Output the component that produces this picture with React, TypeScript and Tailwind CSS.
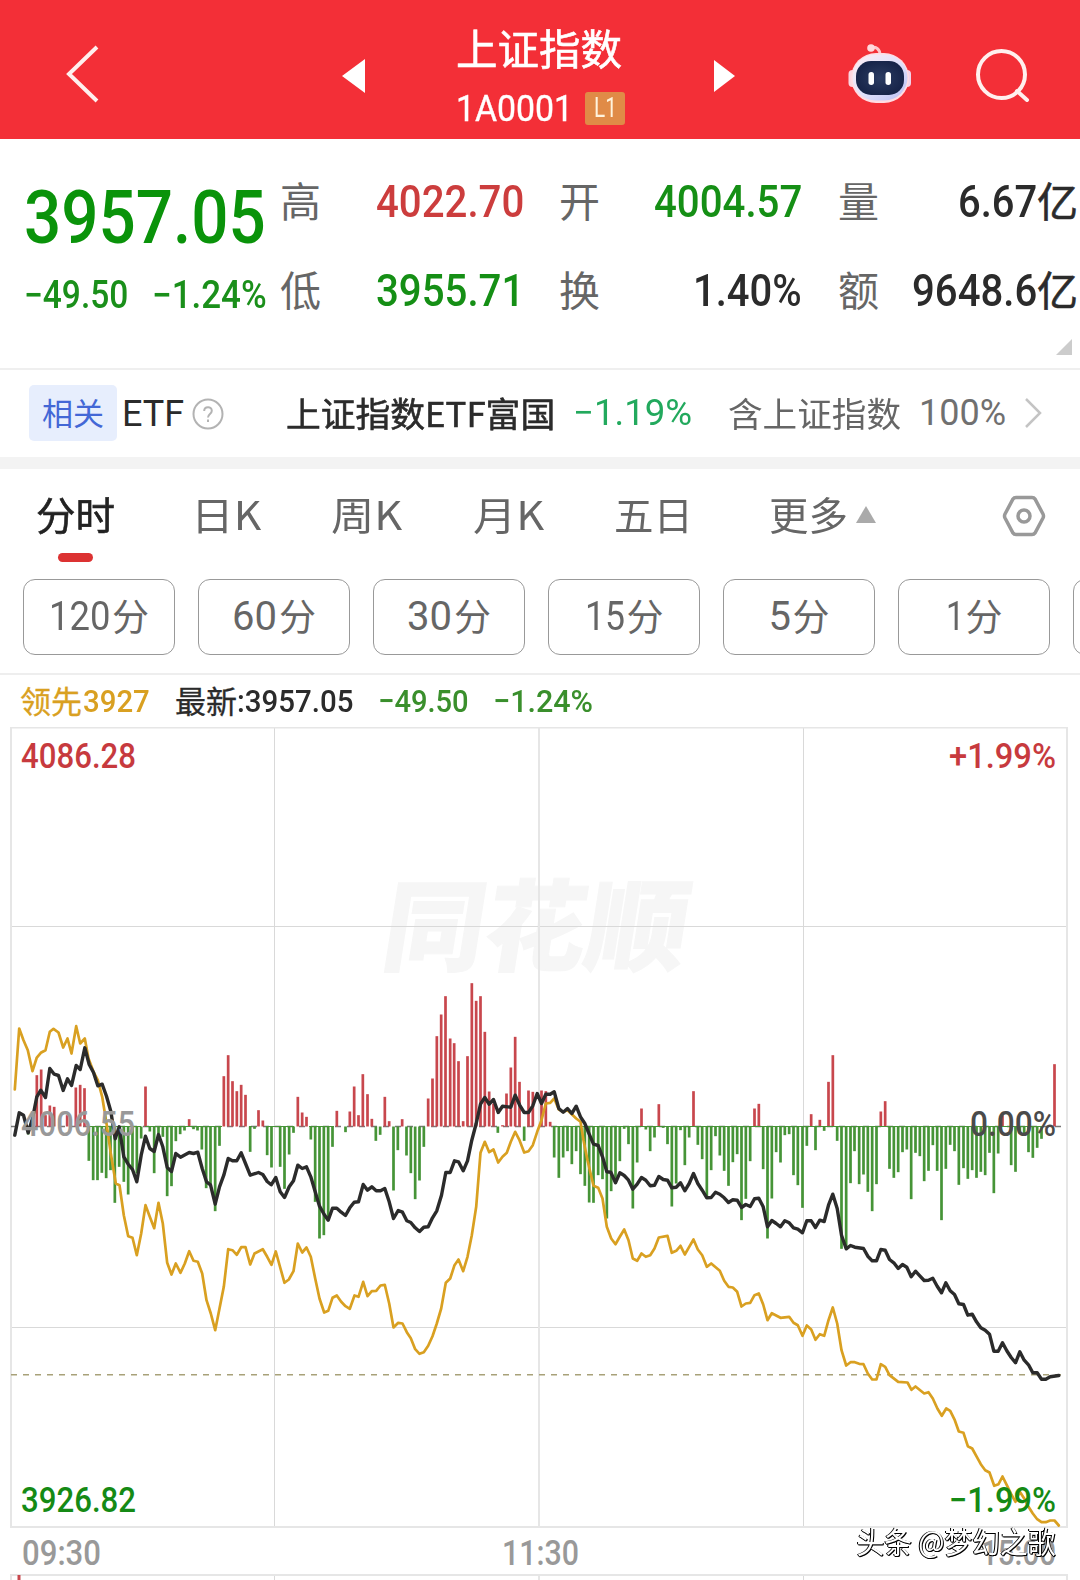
import { useLayoutEffect, useRef, useState, type ReactNode } from "react";

type Point = [number, number];

/** Condenses a line of text so that it fills the width of its box. */
function Fit({ className, children }: { className: string; children: ReactNode }) {
  const box = useRef<HTMLDivElement>(null);
  const text = useRef<HTMLSpanElement>(null);
  const [scale, setScale] = useState(1);
  useLayoutEffect(() => {
    if (box.current && text.current) {
      setScale(box.current.clientWidth / text.current.offsetWidth);
    }
  }, []);
  return (
    <div ref={box} className={`shrink-0 leading-none ${className}`}>
      <span
        ref={text}
        className="inline-block origin-left whitespace-nowrap align-top"
        style={{ transform: `scaleX(${scale})` }}
      >
        {children}
      </span>
    </div>
  );
}

/** Parses "x,y x,y" samples, in thirds of a pixel, from the given origin. */
function at(x0: number, y0: number, samples: string): Point[] {
  return samples
    .trim()
    .split(/\s+/)
    .map((s) => {
      const [x, y] = s.split(",").map(Number);
      return [x0 + (x + 0.5) / 3, y0 + (y + 0.5) / 3];
    });
}

const price: Point[] = [
  ...at(0, 1000, "44,405 57,338 70,345 84,398 97,355 110,290 122,270 136,292 149,205 162,222 175,226 189,271 202,236 214,256 228,196 240,208 254,143 267,193 280,217 293,257 306,252 319,288 332,333 345,416 357,380 371,470 384,492 397,508 410,545 423,465 436,408 449,445 462,454 475,403 488,440 501,502 514,514 527,460 541,471 567,457 580,460 593,456 606,505 619,545 631,554 645,612 658,560 671,525 684,475 697,482 710,482 723,458 736,490 750,525 775,517 788,523 801,544 813,554"),
  ...at(270, 960, "17,652 30,695 43,712 57,680 70,662 83,615 96,625 109,620 122,650 135,695 148,738 162,763 174,780 187,744 200,744 213,756 226,766 239,743 252,726 265,725 279,673 292,690 305,680 318,692 331,692 344,685 357,725 370,775 384,751 397,756 410,782 422,787 435,803 448,814 461,801 474,800 487,773 500,752 514,705 527,637 540,637 553,602 565,605 579,632 592,602 605,540 618,490 631,432 644,412 657,432 670,418 684,457 697,438 722,441 735,405 748,434 762,457 775,457 788,437 801,400 814,430"),
  ...at(530, 1040, "47,162 60,162 72,155 86,205 99,216 112,205 125,220 138,198 151,230 164,250 177,282 190,312 204,316 217,350 230,395 242,396 256,428 269,398 282,406 295,420 308,447 321,432 334,412 347,420 360,437 373,435 386,409 399,418 412,420 425,443 438,441 451,428 464,452 477,430 490,400 503,430 516,450 530,473 543,472 556,456 569,462 582,473 595,487 608,479 621,480 634,502 647,493 660,499 673,476 686,474 699,500 712,560 725,541 738,550 751,560 764,542 777,548 790,563 803,567 817,578"),
  ...at(800, 1040, "20,542 33,542 46,562 59,540 72,544 85,495 98,462 111,505 124,585 138,626 151,616 164,621 190,625 203,648 216,662 229,662 242,628 255,630 268,658 281,668 294,685 307,673 320,681 333,710 346,693 359,707 372,721 385,720 398,714 411,738 424,758 437,728 450,752 463,763 476,791 490,793 503,825 516,822 529,845 542,863 555,870 568,882 581,933 594,933 607,908 620,932 633,952 646,968 659,935 672,960 685,974 698,998 711,998 724,1017 737,1017 750,1010 776,1006"),
];

const leader: Point[] = [
  ...at(0, 1000, "44,268 57,85 70,120 83,150 97,213 110,172 122,158 136,150 149,95 160,86 175,97 189,142 202,115 214,160 228,78 240,130 254,115 265,175 280,215 293,240 306,290 319,370 332,460 347,550 358,555 371,645 384,708 397,713 410,765 423,700 436,615 449,650 462,684 475,608 488,670 501,788 514,823 527,790 541,818 554,790 567,753 580,782 593,785 606,820 619,900 632,940 645,990 658,925 671,860 684,747 697,750 710,764 723,741 736,741 750,793 763,760 788,747 801,770 814,794"),
  ...at(270, 960, "17,874 30,922 43,968 56,958 70,933 83,850 96,877 109,862 122,890 135,955 148,1015 162,1057 174,1052 187,1013 200,1006 213,1025 226,1038 239,1046 253,1006 265,1010 279,965 292,1008 305,993 318,992 331,976 344,974 357,1030 370,1102 384,1088 397,1090 410,1116 422,1134 435,1167 448,1181 461,1176 474,1157 487,1128 500,1090 513,1045 527,968 540,955 553,915 565,898 579,933 592,890 605,825 618,740 631,578 644,545 657,576 670,568 684,607 697,590 710,578 722,545 735,515 748,540 762,577 775,573 788,555 801,515 814,480"),
  ...at(530, 1040, "47,190 60,188 72,175 86,208 99,215 112,210 125,222 138,235 151,245 160,300 172,360 190,437 204,443 217,475 230,560 243,595 256,612 269,590 282,568 295,600 308,655 321,662 334,640 347,650 360,645 373,625 386,592 412,587 425,638 438,632 451,617 464,643 477,620 490,598 503,628 516,645 530,680 543,670 569,692 582,722 595,740 608,742 621,755 634,799 647,790 660,788 673,765 686,760 699,793 712,840 725,819 751,833 777,830 790,848 803,855 817,887"),
  ...at(800, 1040, "20,856 33,868 46,899 59,882 72,887 85,840 98,802 111,850 124,930 138,976 151,966 164,966 177,971 190,972 203,1000 216,1018 229,1018 242,972 255,980"),
  ...at(820, 1340, "208,105 234,125 262,127 274,149 286,139 312,160 325,156 338,175 352,206 365,227 378,205 390,212 404,240 416,274 430,278 443,318 456,325 470,350 482,372 495,390 508,397 522,437 535,432 547,409 560,435 573,462 586,485 599,455 612,475 625,500 638,520 651,537 664,546 677,546 690,541 703,541 716,556"),
];

const bars: Point[] = [
  ...at(0, 1000, "110,225 123,208 136,345 149,316 162,320 201,345 227,262 240,254 253,264 436,259 567,357 671,228 684,165 697,243 710,273 723,254 736,284 775,330 788,361"),
  ...at(0, 1000, "84,403 266,482 279,540 292,540 305,518 318,534 331,510 344,608 357,500 371,545 384,583 397,510 410,520 423,415 449,394 462,519 475,400 488,410 501,588 514,558 527,423 540,402 553,391 580,387 592,391 605,448 618,564 631,555 645,633 658,437 750,455 763,386 801,465 814,502"),
  ...at(270, 960, "30,620 43,686 57,583 70,518 122,538 135,725 148,835 161,825 174,778 187,560 226,516 317,542 330,524 370,691 383,570 409,586 422,639 435,717 448,661 461,560 683,518 762,542"),
  ...at(270, 960, "83,410 96,457 109,470 200,452 239,454 252,379 265,465 278,342 292,402 305,476 344,410 357,483 396,477 474,415 487,355 500,228 513,163 526,108 540,235 552,249 565,303 579,483 592,288 605,69 618,122 631,108 644,215 657,394 670,430 697,495 709,400 722,322 735,230 748,365 775,391 788,395 814,391 827,393"),
  ...at(530, 1040, "60,245 334,205 386,192 490,153 673,205 686,191"),
  ...at(530, 1040, "72,352 86,413 99,352 112,333 125,372 138,333 151,402 164,437 177,487 190,488 204,405 217,417 230,535 243,453 256,428 269,363 282,266 295,312 308,505 321,367 347,268 360,333 373,292 399,263 412,312 425,499 438,430 451,270 464,375 477,292 503,314 516,357 530,470 543,390 556,288 569,346 582,392 595,437 608,366 621,342 634,540 647,476 660,363 699,387 712,595 725,475 738,336 751,367 764,285 777,282 790,405 803,435 817,503 830,317"),
  ...at(800, 1040, "33,222 59,239 85,125 98,45 242,214 255,183 607,225 763,72"),
  ...at(800, 1040, "46,330 72,272 111,302 124,626 138,626 151,429 163,333 177,432 190,403 203,455 216,513 229,432 268,386 281,413 294,396 307,336 320,328 333,477 346,338 359,348 372,423 385,392 398,315 411,392 424,540 437,386 450,314 463,333 476,434 490,384 503,416 516,390 529,413 542,395 555,405 568,338 581,459 594,340 633,375 646,395 659,280 672,280 685,336 698,353 711,323 724,296"),
];

const BASE = 1126.5;

const toPoints = (line: Point[]) => line.map(([x, y]) => `${x.toFixed(1)},${y.toFixed(1)}`).join(" ");

const cjk = "font-['Noto_Sans_CJK_SC',sans-serif]";
const semi = "[-webkit-text-stroke:0.6px_currentColor]";

function Label({ x, y, w, fill, size = 35, children }: { x: number; y: number; w: number; fill: string; size?: number; children: string }) {
  return (
    <text x={x} y={y} fill={fill} fontSize={size} fontWeight={500} textLength={w} lengthAdjust="spacingAndGlyphs">
      {children}
    </text>
  );
}

function Chart() {
  return (
    <svg viewBox="0 727 1080 853" className="block h-[853px] w-full font-[Roboto,sans-serif]">
      <g transform="translate(379 963) skewX(-9)">
        <text className={cjk} fontSize="99" fontWeight="900" fill="#f6f6f6" stroke="#f6f6f6" strokeWidth="1" textLength="304" lengthAdjust="spacingAndGlyphs">
          同花顺
        </text>
      </g>
      <g stroke="#d9d9d9" strokeWidth="1">
        <path d="M11 926.5H1067M11 1327.5H1067M274.5 727V1527M803.5 727V1527M274.5 1575V1580M803.5 1575V1580" />
        <path d="M539 727V1527M539 1575V1580" stroke="#e6e6e6" strokeWidth="2" />
      </g>
      <path d="M11 1580V1575H1067V1580" fill="none" stroke="#e6e6e6" strokeWidth="2" />
      <rect x="11" y="727.5" width="1056" height="799.5" fill="none" stroke="#e6e6e6" strokeWidth="2" />
      <path d="M19 1575V1580" stroke="#c8474d" strokeWidth="3" />
      <path d={`M11 ${BASE}H1067`} stroke="#777" strokeWidth="1.4" strokeDasharray="6 6" />
      {bars.map(([x, y], i) => (
        <rect key={i} x={x - 1.35} y={Math.min(y, BASE)} width="2.7" height={Math.abs(y - BASE)} fill={y < BASE ? "#c8474d" : "#469437"} />
      ))}
      <path d="M88 1126.5H141M145 1126.5H222M249 1126.5H252M266 1126.5H294M309 1126.5H334M553 1126.5H1044" stroke="#469437" strokeWidth="1" />
      <path d="M11 1374.7H1067" stroke="#a8a179" strokeWidth="1.6" strokeDasharray="6 6" />
      <g fill="none" strokeLinejoin="round" strokeLinecap="round">
        <polyline points={toPoints(leader)} stroke="#d9a021" strokeWidth="2.7" />
        <polyline points={toPoints(price)} stroke="#2b2b2b" strokeWidth="3.4" />
      </g>
      <Label x={21} y={1136} w={114} fill="#999">4006.55</Label>
      <Label x={970} y={1136} w={86} fill="#4a4a4a">0.00%</Label>
      <Label x={21} y={768} w={115} fill="#c73a3e">4086.28</Label>
      <Label x={949} y={768} w={107} fill="#c73a3e">+1.99%</Label>
      <Label x={21} y={1512} w={115} fill="#158a15">3926.82</Label>
      <Label x={949} y={1512} w={107} fill="#158a15">−1.99%</Label>
      <Label x={22} y={1565} w={79} fill="#999">09:30</Label>
      <Label x={502} y={1565} w={77} fill="#999">11:30</Label>
      <Label x={981} y={1565} w={75} fill="#999">15:00</Label>
      <text
        className={`${cjk} [filter:drop-shadow(1.5px_1.5px_0_#000)_drop-shadow(-0.5px_0_0_#000)]`}
        fontSize="30"
        x="856.500"
        y="1553"
        fill="#fff"
        textLength="199"
        lengthAdjust="spacingAndGlyphs"
      >
        头条 @梦幻之歌
      </text>
    </svg>
  );
}

function Robot() {
  return (
    <svg viewBox="0 0 66 62" className="h-[62px] w-[66px]">
      <defs>
        <linearGradient id="shell" x1="0" y1="0" x2="1" y2="1">
          <stop offset="0" stopColor="#ffeef3" />
          <stop offset=".55" stopColor="#dfe0fb" />
          <stop offset="1" stopColor="#b9bdf2" />
        </linearGradient>
        <radialGradient id="visor">
          <stop offset="0" stopColor="#2c3c62" />
          <stop offset="1" stopColor="#18254a" />
        </radialGradient>
      </defs>
      <path d="M23 6C29 4 33 7 33 13" fill="none" stroke="#ffc6cb" strokeWidth="3" />
      <circle cx="24" cy="6" r="3.800" fill="#ffd9dd" />
      <rect x="1.500" y="28" width="8" height="17" rx="4" fill="#fbd5df" />
      <rect x="56" y="28" width="8" height="17" rx="4" fill="#f3d3ea" />
      <rect x="4" y="11" width="58" height="50" rx="25" fill="#ffdce2" />
      <rect x="5.500" y="12.500" width="55" height="46" rx="23" fill="url(#shell)" />
      <rect x="9" y="19" width="48" height="34" rx="15" fill="url(#visor)" />
      <rect x="21.500" y="30" width="5.500" height="13" rx="2.700" fill="#fff" />
      <rect x="38.500" y="30" width="5.500" height="13" rx="2.700" fill="#fff" />
    </svg>
  );
}

function Header() {
  return (
    <header className="flex h-[139px] items-start bg-[#f32f37] text-white">
      <svg viewBox="0 0 34 58" className="mt-[45px] ml-[65px] h-[58px] w-[34px]" fill="none" stroke="#fff0ee" strokeWidth="4">
        <path d="M32 2L4 29L32 56" />
      </svg>
      <svg viewBox="0 0 23 34" className="mt-[59px] ml-[243px] h-[34px] w-[23px]" fill="#fff">
        <path d="M23 0V34L0 17Z" />
      </svg>
      <div className="mt-[26px] ml-[91px] w-[170px]">
        <Fit className={`w-[166px] text-[42px] ${semi} ${cjk}`}>上证指数</Fit>
        <div className="mt-[22px] flex items-center">
          <Fit className="w-[117px] text-[37px] [-webkit-text-stroke:0.4px_currentColor]">1A0001</Fit>
          <div className="ml-[12px] flex h-[33px] w-[40px] items-center justify-center rounded-[3px] bg-[#e08b47]">
            <Fit className="w-[23px] text-[27px] text-[#fff3dc]">L1</Fit>
          </div>
        </div>
      </div>
      <svg viewBox="0 0 21 32" className="mt-[60px] ml-[88px] h-[32px] w-[21px]" fill="#fff">
        <path d="M0 0V32L21 16Z" />
      </svg>
      <div className="mt-[42px] ml-[112px]">
        <Robot />
      </div>
      <svg viewBox="0 0 54 54" className="mt-[48px] ml-[63px] h-[54px] w-[54px]" fill="none" stroke="#fff0ee" strokeWidth="4">
        <circle cx="25.500" cy="26.500" r="23.500" />
        <path d="M41 43L51 52" strokeLinecap="round" />
      </svg>
    </header>
  );
}

function Han({ children, className = "" }: { children: string; className?: string }) {
  return <span className={`shrink-0 leading-none whitespace-nowrap ${cjk} ${className}`}>{children}</span>;
}

function Quote() {
  const label = "w-[41px] text-[41px] -mt-[5px] text-[#666]";
  return (
    <section className="flex h-[231px] border-b-2 border-[#efefef] font-medium text-[#2b2b2b]">
      <div className="ml-[24px] w-[256px] pt-[41px]">
        <Fit className="w-[242px] text-[75px] text-[#0a930a]">3957.05</Fit>
        <div className="mt-[21px] flex text-[38px] text-[#1a8f1a]">
          <Fit className="w-[104px]">−49.50</Fit>
          <Fit className="ml-[24px] w-[115px]">−1.24%</Fit>
        </div>
      </div>
      <div className="relative flex-1 pt-[19px] text-[44px]">
        <div className="flex h-[88px] items-center">
          <Han className={`font-normal ${label}`}>高</Han>
          <Fit className="ml-[55px] w-[148px] text-[#cc3d3d]">4022.70</Fit>
          <Han className={`ml-[35px] font-normal ${label}`}>开</Han>
          <Fit className="ml-[54px] w-[148px] text-[#158f15]">4004.57</Fit>
          <Han className={`ml-[36px] font-normal ${label}`}>量</Han>
          <Fit className="ml-[79px] w-[79px]">6.67</Fit>
          <Han className={`-mt-[5px] text-[41px] font-normal ${semi}`}>亿</Han>
        </div>
        <div className="flex h-[90px] items-center">
          <Han className={`font-normal ${label}`}>低</Han>
          <Fit className="ml-[55px] w-[148px] text-[#158f15]">3955.71</Fit>
          <Han className={`ml-[35px] font-normal ${label}`}>换</Han>
          <Fit className="ml-[93px] w-[109px]">1.40%</Fit>
          <Han className={`ml-[36px] font-normal ${label}`}>额</Han>
          <Fit className="ml-[33px] w-[125px]">9648.6</Fit>
          <Han className={`-mt-[5px] text-[41px] font-normal ${semi}`}>亿</Han>
        </div>
        <svg viewBox="0 0 16 16" className="absolute right-[8px] bottom-[13px] h-[16px] w-[16px]" fill="#ccc">
          <path d="M16 0V16H0Z" />
        </svg>
      </div>
    </section>
  );
}

function EtfRow() {
  return (
    <section className="flex h-[99px] items-center border-b-[12px] border-[#f3f3f3] text-[#2b2b2b]">
      <div className="-mt-[1px] ml-[29px] flex h-[56px] w-[88px] items-center justify-center rounded-[5px] bg-[#e7eefd]">
        <Han className="-mt-[3px] text-[31px] text-[#4367d6]">相关</Han>
      </div>
      <Fit className="ml-[5px] w-[62px] text-[36px]">ETF</Fit>
      <svg viewBox="0 0 32 32" className="ml-[8px] h-[32px] w-[32px]" fill="none" stroke="#b3b3b3" strokeWidth="2">
        <circle cx="16" cy="16" r="14.500" />
        <path d="M12.200 13C12.200 8 19.800 8 19.800 12.700C19.800 16 16 16 16 19.500M16 21.500V24" />
      </svg>
      <Fit className={`-mt-[2px] ml-[62px] w-[269px] text-[34px] ${semi} ${cjk}`}>上证指数ETF富国</Fit>
      <Fit className="-mt-[2px] ml-[18px] w-[119px] text-[36px] text-[#22a95d]">−1.19%</Fit>
      <Fit className={`-mt-[2px] ml-[36px] w-[173px] text-[34px] text-[#666] ${cjk}`}>含上证指数</Fit>
      <Fit className="-mt-[2px] ml-[18px] w-[87px] text-[36px] text-[#707070]">100%</Fit>
      <svg viewBox="0 0 18 32" className="-mt-[1px] ml-[18px] h-[32px] w-[18px]" fill="none" stroke="#c4c4c4" strokeWidth="2.500">
        <path d="M2 2L16 16L2 30" />
      </svg>
    </section>
  );
}

function Tabs() {
  const tab = "text-[39px] text-[#666]";
  return (
    <nav className="flex h-[110px] items-start pt-[25px]">
      <div className="ml-[36px] w-[80px]">
        <Fit className={`w-[79px] text-[39px] text-[#222] ${semi} ${cjk}`}>分时</Fit>
        <div className="mt-[20px] ml-[22px] h-[9px] w-[35px] rounded-full bg-[#dc3232]" />
      </div>
      <Fit className={`ml-[75px] w-[70px] ${cjk} ${tab}`}>日K</Fit>
      <Fit className={`ml-[70px] w-[71px] ${cjk} ${tab}`}>周K</Fit>
      <Fit className={`ml-[71px] w-[71px] ${cjk} ${tab}`}>月K</Fit>
      <Fit className={`ml-[70px] w-[79px] ${cjk} ${tab}`}>五日</Fit>
      <Fit className={`ml-[76px] w-[79px] ${cjk} ${tab}`}>更多</Fit>
      <svg viewBox="0 0 20 17" className="mt-[12px] ml-[8px] h-[17px] w-[20px]" fill="#aaa">
        <path d="M10 0L20 17H0Z" />
      </svg>
      <svg viewBox="0 0 44 42" className="mt-[1px] ml-[126px] h-[42px] w-[44px]" fill="none" stroke="#999" strokeWidth="3.500">
        <path d="M14 2.500H30Q32 2.500 33 4L41 19Q42 21 41 23L33 38Q32 39.500 30 39.500H14Q12 39.500 11 38L3 23Q2 21 3 19L11 4Q12 2.500 14 2.500Z" />
        <circle cx="22" cy="21" r="6" />
      </svg>
    </nav>
  );
}

function Minute({ n, className }: { n: string; className: string }) {
  return (
    <div className="flex h-[76px] w-[152px] shrink-0 items-center justify-center rounded-[12px] border border-[#999] text-[#666]">
      <Fit className={`text-[40px] ${className}`}>{n}</Fit>
      <Han className="-mt-[3px] ml-[2px] text-[37px]">分</Han>
    </div>
  );
}

function Minutes() {
  return (
    <div className="flex h-[96px] gap-[23px] overflow-hidden border-b-2 border-[#eee] pl-[23px]">
      <Minute n="120" className="w-[61px]" />
      <Minute n="60" className="w-[45px]" />
      <Minute n="30" className="w-[45px]" />
      <Minute n="15" className="w-[40px]" />
      <Minute n="5" className="w-[22px]" />
      <Minute n="1" className="w-[18px]" />
      <div className="h-[76px] w-[152px] shrink-0 rounded-[12px] border border-[#999]" />
    </div>
  );
}

function Legend() {
  return (
    <div className="flex h-[52px] items-center text-[32px] font-medium">
      <Han className="-mt-[4px] ml-[20px] text-[31px] font-normal text-[#d9a021] [-webkit-text-stroke:0.3px_currentColor]">领先</Han>
      <Fit className="ml-[1px] w-[67px] text-[#d9a021]">3927</Fit>
      <Han className="-mt-[4px] ml-[25px] text-[31px] font-normal text-[#2b2b2b] [-webkit-text-stroke:0.3px_currentColor]">最新</Han>
      <Fit className="w-[116px] text-[#2b2b2b]">:3957.05</Fit>
      <Fit className="ml-[25px] w-[91px] text-[#3a8f2c]">−49.50</Fit>
      <Fit className="ml-[24px] w-[100px] text-[#3a8f2c]">−1.24%</Fit>
    </div>
  );
}

export default function App() {
  return (
    <div className="h-[1580px] w-[1080px] overflow-hidden bg-white font-[Roboto,'Noto_Sans_CJK_SC',sans-serif]">
      <Header />
      <Quote />
      <EtfRow />
      <Tabs />
      <Minutes />
      <Legend />
      <Chart />
    </div>
  );
}
